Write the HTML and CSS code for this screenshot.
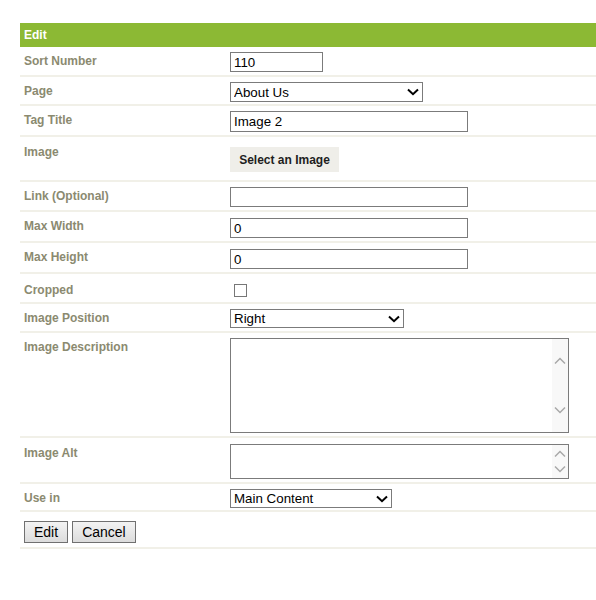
FILE: index.html
```html
<!DOCTYPE html>
<html>
<head>
<meta charset="utf-8">
<link rel="stylesheet" href="styles.css">
</head>
<body>
<div class="panel">
  <div class="head">Edit</div>

  <div class="row">
    <div class="label">Sort Number</div>
    <div class="field"><input class="in w-sort" type="text" value="110"></div>
  </div>

  <div class="row row-tight">
    <div class="label">Page</div>
    <div class="field">
      <span class="sel w-page"><select><option>About Us</option></select>
        <svg class="chev" width="12" height="8" viewBox="0 0 12 8"><path d="M1 1.5 L6 6.2 L11 1.5" fill="none" stroke="#000" stroke-width="2"/></svg>
      </span>
    </div>
  </div>

  <div class="row">
    <div class="label">Tag Title</div>
    <div class="field"><input class="in w-full tall" type="text" value="Image 2"></div>
  </div>

  <div class="row row-image">
    <div class="label">Image</div>
    <div class="field"><button class="pick" type="button">Select an Image</button></div>
  </div>

  <div class="row">
    <div class="label">Link (Optional)</div>
    <div class="field"><input class="in w-full" type="text" value=""></div>
  </div>

  <div class="row row-loose">
    <div class="label">Max Width</div>
    <div class="field"><input class="in w-full" type="text" value="0"></div>
  </div>

  <div class="row row-loose">
    <div class="label">Max Height</div>
    <div class="field"><input class="in w-full" type="text" value="0"></div>
  </div>

  <div class="row row-check">
    <div class="label">Cropped</div>
    <div class="field"><input class="check" type="checkbox"></div>
  </div>

  <div class="row">
    <div class="label">Image Position</div>
    <div class="field">
      <span class="sel w-pos"><select><option>Right</option></select>
        <svg class="chev" width="12" height="8" viewBox="0 0 12 8"><path d="M1 1.5 L6 6.2 L11 1.5" fill="none" stroke="#000" stroke-width="2"/></svg>
      </span>
    </div>
  </div>

  <div class="row">
    <div class="label">Image Description</div>
    <div class="field">
      <span class="ta ta-desc"><textarea></textarea>
        <span class="sb">
          <svg class="up" width="12" height="8" viewBox="0 0 12 8"><path d="M1 6.5 L6 1.5 L11 6.5" fill="none" stroke="#a8a8a8" stroke-width="1.5"/></svg>
          <svg class="down" width="12" height="8" viewBox="0 0 12 8"><path d="M1 1.5 L6 6.5 L11 1.5" fill="none" stroke="#a8a8a8" stroke-width="1.5"/></svg>
        </span>
      </span>
    </div>
  </div>

  <div class="row row-alt">
    <div class="label">Image Alt</div>
    <div class="field">
      <span class="ta ta-alt"><textarea></textarea>
        <span class="sb">
          <svg class="up" width="12" height="8" viewBox="0 0 12 8"><path d="M1 6.5 L6 1.5 L11 6.5" fill="none" stroke="#a8a8a8" stroke-width="1.5"/></svg>
          <svg class="down" width="12" height="8" viewBox="0 0 12 8"><path d="M1 1.5 L6 6.5 L11 1.5" fill="none" stroke="#a8a8a8" stroke-width="1.5"/></svg>
        </span>
      </span>
    </div>
  </div>

  <div class="row row-use">
    <div class="label">Use in</div>
    <div class="field">
      <span class="sel w-use"><select><option>Main Content</option></select>
        <svg class="chev" width="12" height="8" viewBox="0 0 12 8"><path d="M1 1.5 L6 6.2 L11 1.5" fill="none" stroke="#000" stroke-width="2"/></svg>
      </span>
    </div>
  </div>

  <div class="row row-actions">
    <button class="btn" type="button">Edit</button>
    <button class="btn" type="button">Cancel</button>
  </div>
</div>
</body>
</html>
```

FILE: styles.css
```css
html, body {
  margin: 0;
  padding: 0;
  background: #ffffff;
}

body {
  font-family: "Liberation Sans", Arial, sans-serif;
}

.panel {
  margin: 23px 0 0 20px;
}

.head {
  background: #8cb934;
  color: #ffffff;
  font-weight: bold;
  font-size: 12px;
  line-height: 24px;
  height: 24px;
  padding-left: 4px;
}

.row {
  display: grid;
  grid-template-columns: 210px 1fr;
  padding: 5px 0 3px;
  border-bottom: 2px solid #f1f0e8;
}

.row-tight { padding: 5px 0 2px; }
.row-loose { padding: 6px 0 3px; }
.row-alt { padding: 6px 0 3px; }
.row-use { padding: 5px 0 2px; }

.label {
  padding: 2px 0 0 4px;
  font-weight: bold;
  font-size: 12px;
  line-height: 14px;
  color: #8b8a70;
}

.row-loose .label { padding-top: 1px; }

.field {
  display: flex;
  align-items: flex-start;
}

.in {
  box-sizing: border-box;
  height: 20px;
  margin: 0;
  padding: 0 3px;
  border: 1px solid #7b7b7b;
  border-radius: 0;
  font-family: "Liberation Sans", Arial, sans-serif;
  font-size: 13.33px;
  color: #000;
  background: #fff;
  outline: none;
}

.in.tall { height: 21px; }

.w-sort { width: 93px; }
.w-full { width: 238px; }

.sel {
  position: relative;
  display: inline-block;
  height: 20px;
}

.sel select {
  appearance: none;
  -webkit-appearance: none;
  box-sizing: border-box;
  width: 100%;
  height: 20px;
  margin: 0;
  padding: 0 3px;
  border: 1px solid #7b7b7b;
  border-radius: 0;
  background: #fff;
  font-family: "Liberation Sans", Arial, sans-serif;
  font-size: 13.33px;
  color: #000;
}

.sel .chev {
  position: absolute;
  right: 4px;
  top: 6px;
  pointer-events: none;
}

.w-page { width: 193px; }
.w-pos { width: 174px; height: 19px; }
.w-pos select { height: 19px; }
.w-use { width: 162px; height: 19px; }
.w-use select { height: 19px; }

.row-image {
  padding: 8px 0 8px;
}

.row-image .label {
  padding-top: 0;
}

.row-image .field {
  padding-top: 2px;
}

.pick {
  box-sizing: border-box;
  width: 109px;
  height: 25px;
  margin: 0;
  padding: 0;
  border: none;
  border-radius: 0;
  background: #efeee9;
  font-family: "Liberation Sans", Arial, sans-serif;
  font-weight: bold;
  font-size: 12px;
  color: #1e1e1e;
}

.row-check {
  padding: 5px 0 5px;
}

.row-check .label {
  padding-top: 4px;
}

.check {
  appearance: none;
  -webkit-appearance: none;
  box-sizing: border-box;
  width: 13px;
  height: 13px;
  margin: 5px 0 0 4px;
  border: 1px solid #777;
  border-radius: 0;
  background: #fff;
}

.ta {
  position: relative;
  display: inline-block;
}

.ta textarea {
  display: block;
  box-sizing: border-box;
  width: 339px;
  margin: 0;
  padding: 2px;
  border: 1px solid #7b7b7b;
  border-radius: 0;
  resize: none;
  overflow: hidden;
  background: #fff;
  font-family: "Liberation Sans", Arial, sans-serif;
  font-size: 13.33px;
}

.ta-desc textarea { height: 95px; }
.ta-alt textarea { height: 35px; }

.sb {
  position: absolute;
  top: 1px;
  right: 1px;
  bottom: 1px;
  width: 16px;
  background: #f8f8f8;
}

.sb svg {
  position: absolute;
  left: 2px;
}

.ta-desc .up { top: 18px; }
.ta-desc .down { bottom: 18px; }
.ta-alt .up { top: 5px; }
.ta-alt .down { bottom: 5px; }

.row-actions {
  display: flex;
  gap: 4px;
  padding: 9px 0 4px 4px;
}

.btn {
  box-sizing: border-box;
  height: 22px;
  margin: 0;
  padding: 0 9px;
  border: 1px solid #707070;
  border-radius: 0;
  background: linear-gradient(#f3f3f3, #dcdcdc);
  font-family: "Liberation Sans", Arial, sans-serif;
  font-size: 14px;
  color: #000;
}
```
